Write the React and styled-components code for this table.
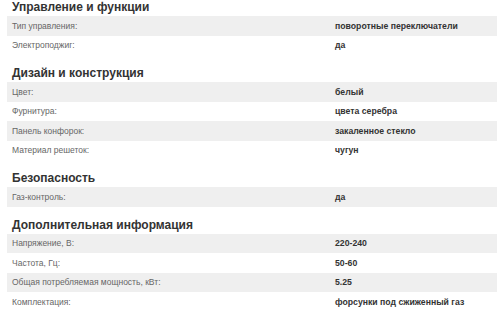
import React from "react";
import styled, { createGlobalStyle } from "styled-components";

const Global = createGlobalStyle`
  html, body { margin: 0; padding: 0; background: #fff; }
  body { font-family: "Liberation Sans", Arial, sans-serif; }
`;

const Page = styled.div`
  padding: 0 3px 0 7px;
  display: flex;
  flex-direction: column;
  gap: 11px;
`;

const Section = styled.section`
  display: flex;
  flex-direction: column;
`;

const Heading = styled.h3`
  margin: 0;
  height: 16px;
  padding-left: 5px;
  font-size: 12px;
  font-weight: bold;
  line-height: 15px;
  color: #333;
`;

const Row = styled.div`
  display: grid;
  grid-template-columns: 323px 1fr;
  height: 19.5px;
  align-items: center;
  padding-left: 5px;
  background: ${(p) => (p.$shaded ? "#efefef" : "#fff")};
`;

const Label = styled.span`
  font-size: 8.5px;
  color: #666;
`;

const Value = styled.span`
  font-size: 8.7px;
  color: #333;
  font-weight: bold;
`;

const data = [
  {
    title: "Управление и функции",
    rows: [
      ["Тип управления:", "поворотные переключатели"],
      ["Электроподжиг:", "да"],
    ],
  },
  {
    title: "Дизайн и конструкция",
    rows: [
      ["Цвет:", "белый"],
      ["Фурнитура:", "цвета серебра"],
      ["Панель конфорок:", "закаленное стекло"],
      ["Материал решеток:", "чугун"],
    ],
  },
  {
    title: "Безопасность",
    rows: [["Газ-контроль:", "да"]],
  },
  {
    title: "Дополнительная информация",
    rows: [
      ["Напряжение, В:", "220-240"],
      ["Частота, Гц:", "50-60"],
      ["Общая потребляемая мощность, кВт:", "5.25"],
      ["Комплектация:", "форсунки под сжиженный газ"],
    ],
  },
];

export default function App() {
  return (
    <>
      <Global />
      <Page>
        {data.map((s) => (
          <Section key={s.title}>
            <Heading>{s.title}</Heading>
            {s.rows.map(([l, v], i) => (
              <Row key={l} $shaded={i % 2 === 0}>
                <Label>{l}</Label>
                <Value>{v}</Value>
              </Row>
            ))}
          </Section>
        ))}
      </Page>
    </>
  );
}
